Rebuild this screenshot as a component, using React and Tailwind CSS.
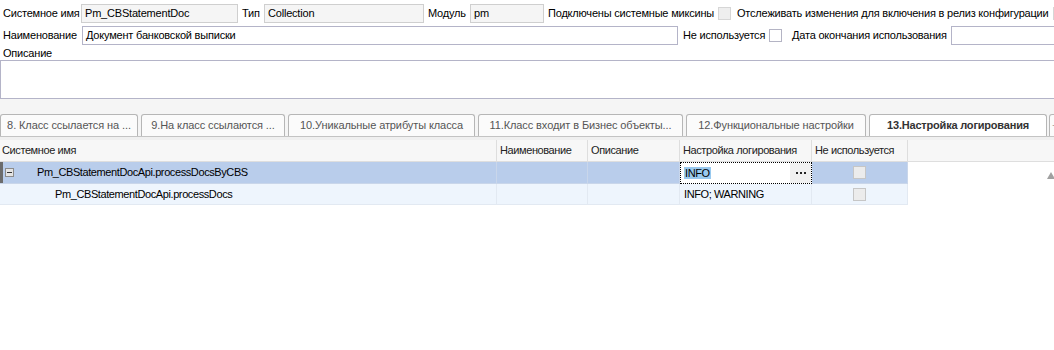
import React from 'react';

const tabs = [
  { label: '8. Класс ссылается на ...', w: 'w-[138px]' },
  { label: '9.На класс ссылаются ...', w: 'w-[144px]' },
  { label: '10.Уникальные атрибуты класса', w: 'w-[187px]' },
  { label: '11.Класс входит в Бизнес объекты...', w: 'w-[205px]' },
  { label: '12.Функциональные настройки', w: 'w-[180px]' },
];

const Checkbox = ({ disabled }) => (
  <span
    className={
      'inline-block h-[13px] w-[13px] shrink-0 border ' +
      (disabled ? 'border-[#d6d6d6] bg-[#eeeeee]' : 'border-[#b4b4c4] bg-white')
    }
  />
);

const GridCheckbox = () => (
  <span className="inline-block h-[13px] w-[13px] border border-[#c6c6c6] bg-[#ececec]" />
);

const App = () => {
  return (
    <div className="relative h-[350px] w-[1054px] overflow-hidden bg-white text-[11px] text-black font-['Liberation_Sans',Arial,sans-serif]">
      {/* верхняя форма */}
      <div className="tracking-[-0.2px]">
        <div className="mt-[4px] flex h-[19px] items-center whitespace-nowrap">
          <span className="w-[81px] shrink-0 pl-[3px]">Системное имя</span>
          <div className="flex h-[19px] w-[157px] shrink-0 items-center border border-[#cfcfcf] bg-[#f5f5f5] px-[3px]">Pm_CBStatementDoc</div>
          <span className="w-[26px] shrink-0 pl-[4px]">Тип</span>
          <div className="flex h-[19px] w-[160px] shrink-0 items-center border border-[#cfcfcf] bg-[#f5f5f5] px-[3px]">Collection</div>
          <span className="w-[46px] shrink-0 pl-[4px]">Модуль</span>
          <div className="flex h-[19px] w-[74px] shrink-0 items-center border border-[#cfcfcf] bg-[#f5f5f5] px-[3px]">pm</div>
          <span className="w-[174px] shrink-0 pl-[4px]">Подключены системные миксины</span>
          <Checkbox disabled />
          <span className="shrink-0 pl-[6px] pr-[4px]">Отслеживать изменения для включения в релиз конфигурации</span>
          <Checkbox disabled />
        </div>

        <div className="mt-[3px] flex h-[19px] items-center whitespace-nowrap">
          <span className="w-[82px] shrink-0 pl-[3px]">Наименование</span>
          <div className="flex h-[19px] w-[596px] shrink-0 items-center border border-[#b4b4c8] bg-white px-[3px]">Документ банковской выписки</div>
          <span className="w-[91px] shrink-0 pl-[5px]">Не используется</span>
          <Checkbox />
          <span className="w-[169px] shrink-0 pl-[10px]">Дата окончания использования</span>
          <div className="h-[19px] w-[140px] shrink-0 border border-[#b4b4c8] bg-white" />
        </div>

        <div className="h-[15px] pl-[3px] pt-[2px] leading-[13px]">Описание</div>
        <div className="h-[39px] w-[1060px] border border-[#b4b4c8] bg-white" />
      </div>

      {/* вкладки */}
      <div className="h-[15px] bg-[#f5f5f5]" />
      <div className="flex h-[22px] items-end whitespace-nowrap bg-[#f5f5f5] tracking-[-0.1px]">
        {tabs.map((t) => (
          <div
            key={t.label}
            className={`${t.w} mr-[3px] flex h-[22px] shrink-0 items-center justify-center rounded-t-[3px] border border-b-0 border-[#b6b6b6] bg-[#fbfbfb] text-[#555555]`}
          >
            {t.label}
          </div>
        ))}
        <div className="mr-[2px] flex h-[22px] w-[178px] shrink-0 items-center justify-center rounded-t-[3px] border border-b-0 border-[#b6b6b6] bg-white font-bold tracking-[-0.2px] text-[#333333]">
          13.Настройка логирования
        </div>
        <div className="flex h-[22px] w-[20px] shrink-0 items-center rounded-t-[3px] border border-b-0 border-[#b6b6b6] bg-[#fbfbfb] pl-[2px] text-[14px] text-[#aaaaaa]">
          +
        </div>
      </div>
      <div className="h-[4px] border-t border-[#c4c4c4] bg-[#f0f0f0]" />

      {/* грид */}
      <div className="relative tracking-[-0.4px]">
        <div className="flex h-[22px] items-center whitespace-nowrap border-b border-[#dedede] bg-[#f7f7f7] text-[#222222]">
          <div className="flex h-full w-[497px] shrink-0 items-center border-r border-[#dedede] pl-[2px]">Системное имя</div>
          <div className="flex h-full w-[91px] shrink-0 items-center border-r border-[#dedede] pl-[3px]">Наименование</div>
          <div className="flex h-full w-[92px] shrink-0 items-center border-r border-[#dedede] pl-[3px]">Описание</div>
          <div className="flex h-full w-[132px] shrink-0 items-center border-r border-[#dedede] pl-[3px]">Настройка логирования</div>
          <div className="flex h-full w-[96px] shrink-0 items-center border-r border-[#dedede] pl-[3px]">Не используется</div>
        </div>

        <div className="flex h-[22px] whitespace-nowrap">
          <div className="flex h-full w-[497px] shrink-0 items-center border-b border-r border-[#c9d6ea] bg-[#b9cdeb]">
            <span className="h-full w-[3px] bg-[#6c6c6c]" />
            <span className="ml-[2px] flex h-[9px] w-[9px] items-center justify-center border border-[#8c8c8c] bg-[#e4e4e4]">
              <span className="h-[1px] w-[5px] bg-[#333333]" />
            </span>
            <span className="ml-[23px]">Pm_CBStatementDocApi.processDocsByCBS</span>
          </div>
          <div className="h-full w-[91px] shrink-0 border-b border-r border-[#c9d6ea] bg-[#b9cdeb]" />
          <div className="h-full w-[92px] shrink-0 border-b border-r border-[#c9d6ea] bg-[#b9cdeb]" />
          <div className="flex h-full w-[132px] shrink-0 items-stretch border border-dotted border-black bg-white">
            <div className="flex flex-1 items-center pl-[3px]">
              <span className="bg-[#99c9ef] px-[1px] leading-[12px]">INFO</span>
            </div>
            <div className="flex w-[21px] items-center justify-center gap-[2px] bg-[#f0f0f0]">
              <span className="h-[2px] w-[2px] bg-[#222222]" />
              <span className="h-[2px] w-[2px] bg-[#222222]" />
              <span className="h-[2px] w-[2px] bg-[#222222]" />
            </div>
          </div>
          <div className="flex h-full w-[96px] shrink-0 items-center justify-center border-b border-r border-[#c9d6ea] bg-[#b9cdeb]">
            <GridCheckbox />
          </div>
        </div>

        <div className="flex h-[21px] whitespace-nowrap">
          <div className="flex h-full w-[497px] shrink-0 items-center border-b border-r border-[#e2e9f2] bg-[#eef5fd] pl-[55px]">
            Pm_CBStatementDocApi.processDocs
          </div>
          <div className="h-full w-[91px] shrink-0 border-b border-r border-[#e2e9f2] bg-[#eef5fd]" />
          <div className="h-full w-[92px] shrink-0 border-b border-r border-[#e2e9f2] bg-[#eef5fd]" />
          <div className="flex h-full w-[132px] shrink-0 items-center border-b border-r border-[#e2e9f2] bg-[#eef5fd] pl-[4px]">
            INFO; WARNING
          </div>
          <div className="flex h-full w-[96px] shrink-0 items-center justify-center border-b border-r border-[#e2e9f2] bg-[#eef5fd]">
            <GridCheckbox />
          </div>
        </div>

        <svg className="absolute left-[1047px] top-[32px]" width="8" height="7" viewBox="0 0 8 7">
          <path d="M4 0 L8 7 L0 7 Z" fill="#a0a0a0" />
        </svg>
      </div>
    </div>
  );
};

export default App;
